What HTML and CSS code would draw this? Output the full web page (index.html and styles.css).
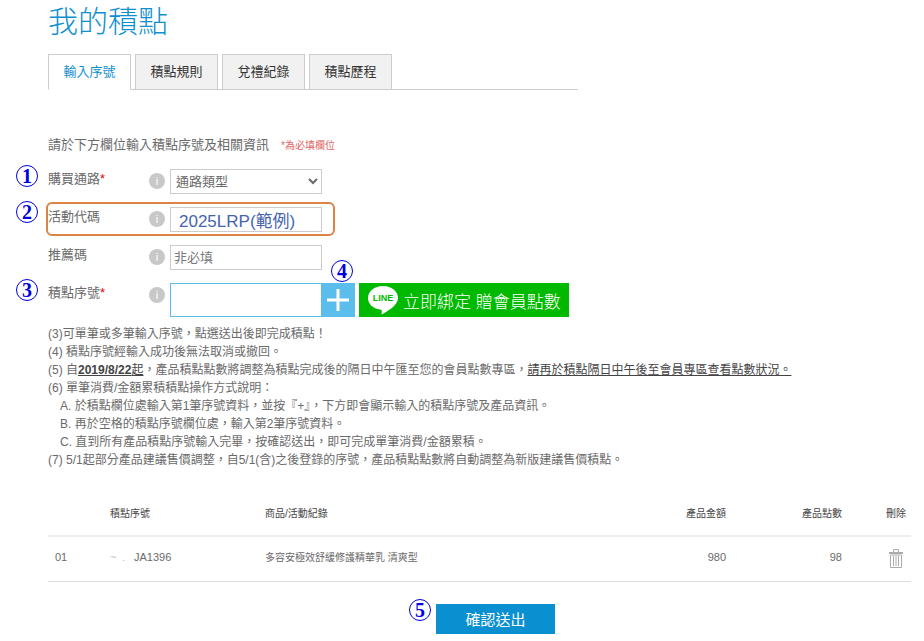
FILE: index.html
```html
<!DOCTYPE html>
<html lang="zh-Hant">
<head>
    <meta charset="UTF-8">
    <meta name="viewport" content="width=device-width, initial-scale=1.0">
    <title>我的積點</title>
    <link rel="stylesheet" href="styles.css">
</head>
<body>
    <main class="container">
        <h1>我的積點</h1>

        <nav class="tabs">
            <a href="#" class="tab active">輸入序號</a>
            <a href="#" class="tab">積點規則</a>
            <a href="#" class="tab">兌禮紀錄</a>
            <a href="#" class="tab">積點歷程</a>
        </nav>

        <form id="points-form">
            <p class="intro">請於下方欄位輸入積點序號及相關資訊<span class="note">*為必填欄位</span></p>

            <div class="row">
                <span class="step">1</span>
                <label for="channel">購買通路<span class="required">*</span></label>
                <span class="info">i</span>
                <select id="channel" class="field">
                    <option>通路類型</option>
                </select>
            </div>

            <div class="row highlight">
                <span class="step step-up">2</span>
                <label for="campaign">活動代碼</label>
                <span class="info">i</span>
                <input type="text" id="campaign" class="field example" value="2025LRP(範例)">
            </div>

            <div class="row">
                <label for="referral">推薦碼</label>
                <span class="info">i</span>
                <input type="text" id="referral" class="field" placeholder="非必填">
            </div>

            <div class="row">
                <span class="step">3</span>
                <label for="serial">積點序號<span class="required">*</span></label>
                <span class="info">i</span>
                <div class="serial">
                    <input type="text" id="serial" class="serial-input">
                    <button type="button" class="add-btn" aria-label="新增">
                        <svg width="24" height="24" viewBox="0 0 24 24"><path d="M12 1v22M1 12h22" stroke="#fff" stroke-width="3"/></svg>
                    </button>
                    <span class="step step-add">4</span>
                    <a href="#" class="line-btn">
                        <svg width="32" height="30" viewBox="0 0 32 30">
                            <path d="M16 1C7.500 1 1 6.300 1 13c0 6 5 10.600 12 11.600 1.600.3 2 .9 1.800 2.200l-.3 1.700c-.1.700.4.900 1 .5C20 26.500 31 20.500 31 13 31 6.300 24.500 1 16 1z" fill="#fff"/>
                            <text x="16" y="16" text-anchor="middle" class="line-logo">LINE</text>
                        </svg>
                        <span>立即綁定 贈會員點數</span>
                    </a>
                </div>
            </div>
        </form>

        <div class="rules">
            <p>(3)可單筆或多筆輸入序號，點選送出後即完成積點！</p>
            <p>(4) 積點序號經輸入成功後無法取消或撤回。</p>
            <p>(5) 自<u><b>2019/8/22</b>起</u>，產品積點點數將調整為積點完成後的隔日中午匯至您的會員點數專區，<u>請再於積點隔日中午後至會員專區查看點數狀況。</u></p>
            <p>(6) 單筆消費/金額累積積點操作方式說明：</p>
            <p class="sub">A. 於積點欄位處輸入第1筆序號資料，並按『+』，下方即會顯示輸入的積點序號及產品資訊。</p>
            <p class="sub">B. 再於空格的積點序號欄位處，輸入第2筆序號資料。</p>
            <p class="sub">C. 直到所有產品積點序號輸入完畢，按確認送出，即可完成單筆消費/金額累積。</p>
            <p>(7) 5/1起部分產品建議售價調整，自5/1(含)之後登錄的序號，產品積點點數將自動調整為新版建議售價積點。</p>
        </div>

        <table>
            <thead>
                <tr>
                    <th class="col-no"></th>
                    <th class="col-serial">積點序號</th>
                    <th>商品/活動紀錄</th>
                    <th class="col-num">產品金額</th>
                    <th class="col-num">產品點數</th>
                    <th class="col-del">刪除</th>
                </tr>
            </thead>
            <tbody>
                <tr>
                    <td class="col-no">01</td>
                    <td class="col-serial"><div class="masked"><span class="faint">~</span><span class="faint">.</span>JA1396</div></td>
                    <td class="product">多容安極效舒緩修護精華乳 清爽型</td>
                    <td class="col-num">980</td>
                    <td class="col-num">98</td>
                    <td class="col-del">
                        <button type="button" class="del-btn" aria-label="刪除">
                            <svg width="14" height="19" viewBox="0 0 14 19" fill="none" stroke="#aaa">
                                <path d="M4.500 3V.5h5V3"/>
                                <path d="M0 4h14" stroke-width="2"/>
                                <path d="M1.500 6v12.500h11V6zM4.500 7v10M7 7v10M9.500 7v10"/>
                            </svg>
                        </button>
                    </td>
                </tr>
            </tbody>
        </table>

        <div class="actions">
            <div class="submit-wrap">
                <span class="step step-submit">5</span>
                <button type="submit" form="points-form" class="submit-btn">確認送出</button>
            </div>
        </div>
    </main>
</body>
</html>
```
FILE: styles.css
```css
:root {
    --text: #6a6a6a;
    --blue: #0f8fcf;
    --border: #ccc;
}

*,
*::before {
    margin: 0;
    padding: 0;
    box-sizing: border-box;
}

body {
    background: #fff;
    color: var(--text);
    font-family: "Liberation Sans", "Noto Sans CJK TC", sans-serif;
    font-size: 13px;
}

button,
input,
select {
    font: inherit;
    color: inherit;
}

button {
    border: none;
    cursor: pointer;
}

.container {
    padding: 0 13px 7px 48px;
}

h1 {
    color: var(--blue);
    font-size: 30px;
    font-weight: 300;
    line-height: 44px;
    margin-bottom: 10px;
}

/* Tabs */
.tabs {
    display: flex;
    gap: 4px;
    max-width: 530px;
    border-bottom: 1px solid var(--border);
}

.tab {
    width: 83px;
    height: 36px;
    margin-bottom: -1px;
    border: 1px solid var(--border);
    background: #f1f1f1;
    color: #333;
    line-height: 34px;
    text-align: center;
    text-decoration: none;
}

.tab.active {
    background: #fff;
    border-bottom-color: #fff;
    color: var(--blue);
}

/* Form */
.intro {
    margin-top: 45px;
    margin-bottom: 13px;
    line-height: 20px;
}

.note {
    margin-left: 12px;
    color: #e06666;
    font-size: 10px;
}

.row {
    position: relative;
    display: grid;
    grid-template-columns: 101px 21px 1fr;
    align-items: start;
    margin-bottom: 13px;
}

.row label {
    line-height: 20px;
}

.required {
    color: #e00;
}

.info {
    width: 16px;
    height: 16px;
    margin-top: 4px;
    border-radius: 50%;
    background: #c8c8c8;
    color: #fff;
    font-size: 11px;
    line-height: 16px;
    text-align: center;
}

.field {
    width: 152px;
    height: 25px;
    padding: 0 3px;
    border: 1px solid var(--border);
    background: #fff;
}

select.field {
    padding: 0 1px;
}

.field::placeholder {
    color: #777;
}

.example {
    padding: 0 8px;
    color: #4664ae;
    font-size: 17px;
}

.highlight::before {
    content: "";
    position: absolute;
    top: -5px;
    left: -2px;
    width: 289px;
    height: 34px;
    border: 2px solid #dc8445;
    border-radius: 6px;
    pointer-events: none;
}

/* Numbered step markers */
.step {
    position: absolute;
    top: -4px;
    left: -32px;
    width: 22px;
    height: 22px;
    border: 1px solid #0000e0;
    border-radius: 50%;
    color: #0000e0;
    font-family: "Liberation Serif", serif;
    font-size: 20px;
    font-weight: 700;
    line-height: 20px;
    text-align: center;
}

.step-up {
    top: -6px;
}

.step-add {
    top: -23px;
    left: 161px;
}

.step-submit {
    top: -5px;
    left: -27px;
}

.serial {
    position: relative;
    display: flex;
}

.serial-input {
    width: 151px;
    height: 34px;
    padding: 0 6px;
    border: 1px solid #5bbdec;
    border-right: none;
}

.add-btn {
    display: flex;
    align-items: center;
    justify-content: center;
    width: 34px;
    height: 34px;
    margin-right: 4px;
    background: #5bbdec;
}

.line-btn {
    display: flex;
    align-items: center;
    gap: 4px;
    height: 34px;
    padding: 0 8px;
    background: #00b900;
    color: #fff;
    font-size: 17px;
    font-weight: 300;
    text-decoration: none;
    white-space: nowrap;
}

.line-logo {
    fill: #00b900;
    font-size: 9px;
    font-weight: 700;
}

/* Rules */
.rules {
    margin-top: -5px;
    font-size: 12px;
    line-height: 18px;
}

.rules .sub {
    padding-left: 12px;
}

.rules u {
    color: #444;
}

/* Records */
table {
    width: 100%;
    margin-top: 21px;
    border-collapse: collapse;
    font-size: 11px;
    text-align: left;
}

th {
    height: 46px;
    padding: 0 7px 1px;
    border-bottom: 2px solid #eee;
    color: #444;
    font-size: 10px;
    font-weight: 400;
}

td {
    height: 45px;
    padding: 0 7px 4px;
    border-bottom: 1px solid #ddd;
}

.col-no {
    width: 55px;
}

.col-serial {
    width: 155px;
}

.col-num {
    width: 116px;
    text-align: right;
}

.col-del {
    width: 62px;
    padding-right: 5px;
    padding-bottom: 0;
    text-align: right;
}

.product {
    font-size: 10px;
}

.masked {
    display: flex;
}

.faint {
    width: 12px;
    color: #bbb;
}

.del-btn {
    display: inline-flex;
    justify-content: center;
    width: 20px;
    background: none;
    vertical-align: middle;
}

/* Submit */
.actions {
    display: flex;
    justify-content: center;
    margin-top: 22px;
    padding-left: 32px;
}

.submit-wrap {
    position: relative;
}

.submit-btn {
    width: 119px;
    height: 30px;
    background: #0a8fd0;
    color: #fff;
    font-size: 15px;
}
```
